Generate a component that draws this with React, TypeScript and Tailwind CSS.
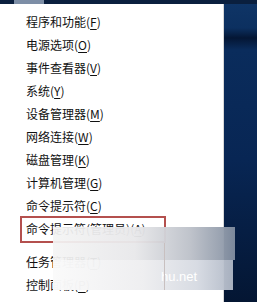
const items: { label: string; key: string; gapAfter?: boolean }[] = [
  { label: "程序和功能", key: "F" },
  { label: "电源选项", key: "O" },
  { label: "事件查看器", key: "V" },
  { label: "系统", key: "Y" },
  { label: "设备管理器", key: "M" },
  { label: "网络连接", key: "W" },
  { label: "磁盘管理", key: "K" },
  { label: "计算机管理", key: "G" },
  { label: "命令提示符", key: "C" },
  { label: "命令提示符(管理员)", key: "A", gapAfter: true },
  { label: "任务管理器", key: "T" },
  { label: "控制面板", key: "P" },
  { label: "文件资源管理器", key: "E" },
];

export default function App() {
  return (
    <div
      className="relative h-[302px] w-[257px] overflow-hidden bg-[linear-gradient(180deg,#0f3567_0px,#0c3060_28px,#041634_38px,#0a2c5c_50px,#082654_160px,#041633_302px)]"
      style={{ fontFamily: '"Noto Sans CJK SC", "Liberation Sans", sans-serif' }}
    >
      <div className="flex h-[4px] bg-[#0a1f3e]">
        <div className="ml-[14px] h-full w-[30px] bg-[#7d8ea6]" />
      </div>

      <div className="h-[298px] w-[224px] border-r border-[#d8d8d8] bg-white pt-[6px]">
        {items.map((it) => (
          <div
            key={it.label}
            className={`flex h-[23px] items-center pl-[26px] text-[12px] leading-none text-[#111] ${it.gapAfter ? "mb-[10px]" : ""}`}
          >
            <span>
              {it.label}(<span className="underline underline-offset-2">{it.key}</span>)
            </span>
          </div>
        ))}
      </div>

      {/* selection outline */}
      <div className="absolute left-[20px] top-[216px] h-[27px] w-[146px] border-2 border-[#b4504e]" />

      {/* watermark smear */}
      <div className="absolute left-[53px] top-[227px] h-[63px] w-[182px]">
        <div className="h-[33px] bg-[linear-gradient(90deg,rgba(244,244,244,0.93)_0%,rgba(232,232,234,0.96)_45%,rgba(190,194,202,0.97)_75%,rgba(130,142,160,0.95)_100%)]" />
        <div className="relative h-[30px] w-[180px] bg-[linear-gradient(90deg,rgba(250,250,250,0.98)_0%,rgba(238,238,240,0.97)_50%,rgba(214,218,226,0.96)_80%,rgba(176,184,198,0.95)_100%)]">
          <span
            className="absolute left-[108px] top-[10px] text-[13px] leading-none text-white"
            style={{ fontFamily: '"Liberation Sans", sans-serif' }}
          >
            hu.net
          </span>
        </div>
        <div className="absolute left-[111px] top-[16px] h-[47px] w-px bg-[#c8c0c0]" />
      </div>
    </div>
  );
}
